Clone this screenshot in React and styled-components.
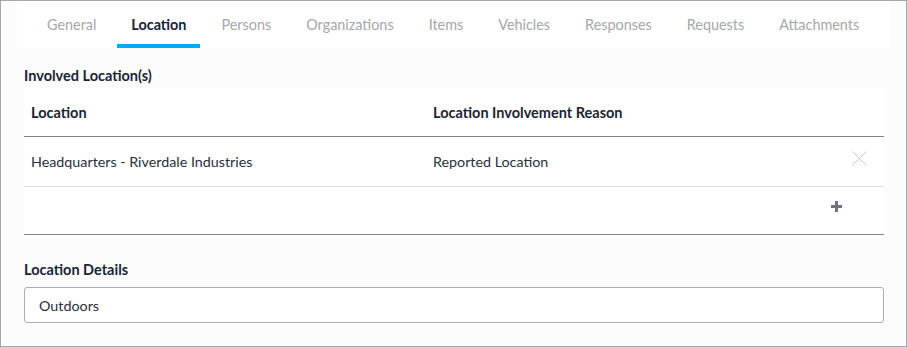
import React from "react";
import styled, { createGlobalStyle } from "styled-components";

const Global = createGlobalStyle`
  html, body { margin: 0; padding: 0; background: #fcfcfc; }
  * { box-sizing: border-box; }
  body { font-family: "Lato", "Open Sans", sans-serif; }
`;

const Frame = styled.div`
  width: 907px;
  height: 347px;
  border: 1px solid #a4a8ad;
  background: #fcfcfc;
  display: flex;
  flex-direction: column;
`;

const TabBar = styled.nav`
  margin: 0 15px 0 16px;
  height: 47px;
  background: #ffffff;
  display: flex;
  padding-left: 16px;
  gap: 7px;
`;

const Tab = styled.div`
  height: 47px;
  padding: 0 14px;
  display: flex;
  align-items: center;
  font-size: 14.4px;
  font-weight: ${(p) => (p.$active ? 700 : 400)};
  color: ${(p) => (p.$active ? "#16233a" : "#a5a8ac")};
  border-bottom: 4px solid ${(p) => (p.$active ? "#00aeef" : "transparent")};
  padding-top: 3px;
`;

const Content = styled.div`
  padding: 0 22px 0 23px;
  display: flex;
  flex-direction: column;
`;

const SectionTitle = styled.div`
  font-size: 14.5px;
  font-weight: 700;
  color: #1a2536;
  line-height: 18px;
  margin-top: ${(p) => p.$top}px;
`;

const Table = styled.div`
  margin-top: 3px;
  background: #ffffff;
`;

const Row = styled.div`
  display: grid;
  grid-template-columns: 402px 1fr 60px;
  align-items: center;
  height: ${(p) => p.$h}px;
  border-bottom: 1px solid ${(p) => (p.$strong ? "#7e858d" : "#dcdfe3")};
`;

const HeadCell = styled.div`
  padding-left: 7px;
  font-size: 14.5px;
  font-weight: 700;
  color: #1a2536;
`;

const Cell = styled.div`
  padding-left: 7px;
  font-size: 14.3px;
  color: #28303c;
`;

const ActionCell = styled.div`
  display: flex;
  justify-content: flex-end;
  padding-right: ${(p) => p.$pr}px;
  padding-bottom: ${(p) => p.$pb || 0}px;
`;

const IconButton = styled.button`
  border: 0;
  background: none;
  padding: 0;
  display: flex;
  cursor: pointer;
`;

const Input = styled.div`
  margin-top: 8px;
  height: 36px;
  border: 1px solid #a9aeb4;
  border-radius: 3px;
  background: #ffffff;
  display: flex;
  align-items: center;
  padding-left: 14px;
  font-size: 14.3px;
  color: #28303c;
`;

const tabs = [
  "General",
  "Location",
  "Persons",
  "Organizations",
  "Items",
  "Vehicles",
  "Responses",
  "Requests",
  "Attachments",
];

export default function App() {
  return (
    <>
      <Global />
      <Frame>
        <TabBar>
          {tabs.map((t) => (
            <Tab key={t} $active={t === "Location"}>
              {t}
            </Tab>
          ))}
        </TabBar>
        <Content>
          <SectionTitle $top={19}>Involved Location(s)</SectionTitle>
          <Table>
            <Row $h={49} $strong>
              <HeadCell>Location</HeadCell>
              <HeadCell>Location Involvement Reason</HeadCell>
              <div />
            </Row>
            <Row $h={50}>
              <Cell>Headquarters - Riverdale Industries</Cell>
              <Cell>Reported Location</Cell>
              <ActionCell $pr={17} $pb={6}>
                <IconButton aria-label="Remove">
                  <svg width="15" height="15" viewBox="0 0 15 15">
                    <path d="M0.5 0.5 L14.5 14.5 M14.5 0.5 L0.5 14.5" stroke="#c9cacd" strokeWidth="1" fill="none" />
                  </svg>
                </IconButton>
              </ActionCell>
            </Row>
            <Row $h={48} $strong>
              <div />
              <div />
              <ActionCell $pr={42} $pb={8}>
                <IconButton aria-label="Add">
                  <svg width="11" height="11" viewBox="0 0 11 11">
                    <path d="M5.5 0 V11 M0 5.5 H11" stroke="#6e7580" strokeWidth="3" fill="none" />
                  </svg>
                </IconButton>
              </ActionCell>
            </Row>
          </Table>
          <SectionTitle $top={26}>Location Details</SectionTitle>
          <Input>Outdoors</Input>
        </Content>
      </Frame>
    </>
  );
}
